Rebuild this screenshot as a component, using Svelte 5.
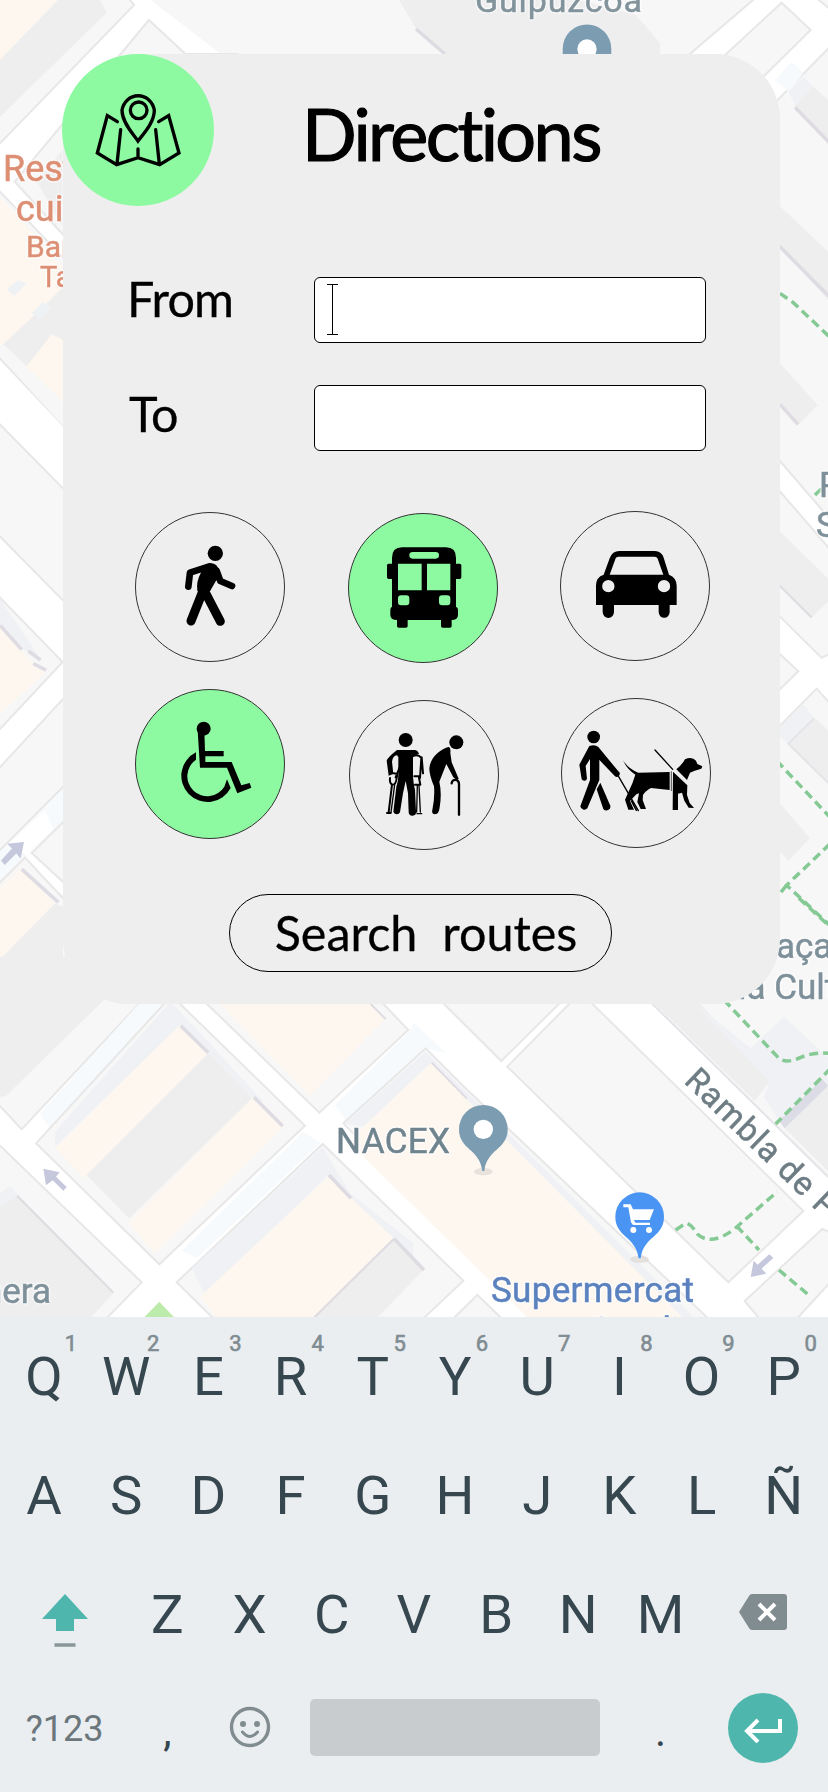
<script>
  const topRow = ['Q', 'W', 'E', 'R', 'T', 'Y', 'U', 'I', 'O', 'P'];
  const homeRow = ['A', 'S', 'D', 'F', 'G', 'H', 'J', 'K', 'L', 'Ñ'];
  const lowRow = ['Z', 'X', 'C', 'V', 'B', 'N', 'M'];
</script>

<main class="page">
  <svg class="map" viewBox="0 0 828 1320" width="828" height="1320" aria-hidden="true">
    <rect width="828" height="1320" fill="#f7f7f7" />

    <!-- north-west blocks -->
    <g transform="scale(.528 .33333)">
      <path class="road" d="M245 0 255 15 0 430V580L130 800H500V162H418L285 0Z" />
      <path class="block" d="M-9-9H242L254 15-9 445Z" />
      <path class="cream" d="M0 0H110L0 180Z" />
      <path class="grey" d="M110 0H190L202 38 0 350V180Z" />
      <path class="block" d="M282 60 28 545 120 705H450V162H351Z" />
      <path class="grey" d="M70 545 118 450V680Z" />
      <path class="block" d="M-9 560 130 790V1300L-9 1060Z" />
      <path class="cream" d="M0 590 118 800V1200L50 1100 8 1030 0 1040Z" />
    </g>
    <!-- west side -->
    <g transform="translate(0 280) scale(.33333 .45918)">
      <path class="cream" d="M0 0H189V265L80 188 0 130Z" />
      <path class="grey" d="M10 140 130 58 189 15V130L155 118 80 188Z" />
      <path class="blue" d="M20 20 55 0 80 8 42 35Z" />
      <path class="blue" d="M95 72 130 48 155 62 118 86Z" />
      <path class="road" d="M0 175 200 328V1340L0 1300Z" />
      <path class="block" d="M-9 308 200 462V706L-9 552Z" />
      <path class="block" d="M-9 685 188 832-9 985Z" />
      <path class="shade" d="M0 695 125 828 105 815 70 805 0 748Z" />
      <path class="cream" d="M0 755 65 808 90 830 125 852 140 852 0 945Z" />
      <path class="mark" d="M0 752 65 805M85 808 122 828M100 835 138 850" />
      <path class="block" d="M-9 1068 200 904V1096L-9 1248Z" />
      <path class="blueroad" d="M0 1245 189 1108V1180L160 1197 0 1310Z" />
      <path class="road" d="M30 1225 135 1155 160 1195 80 1252 50 1240Z" />
      <path class="block" d="M95 1248 200 1173V1318Z" />
      <path class="block" d="M-9 1318 75 1258 200 1355V1600H-9Z" />
      <path class="cream" d="M0 1325 60 1283 165 1358 0 1480Z" />
      <path class="mark" d="M65 1283 175 1355" />
      <path class="grey" d="M165 1358 189 1365V1600H0V1480Z" />
      <path class="arrow" d="M72 1224 22 1228 36 1238 3 1264 14 1274 49 1249 62 1260Z" />
    </g>

    <!-- north-east -->
    <path class="grey" d="M399 0 417 30 446 54H660V43L636 15 580 0Z" />
    <path class="mark" d="M416 29 445 54" />
    <g transform="translate(540 0) scale(.33333)">
      <path class="road edge" d="M645-5 450 162 560 200 705 308 874 136V30L830-5Z" />
      <path class="block" d="M725 8 812 90 665 235 540 179Z" />
      <path class="blueroad" d="M705 240 755 185 790 220 745 275Z" />
      <path class="shade" d="M745 275 790 232 820 260 768 320Z" />
      <path class="grey" d="M820 260 864 300V430L765 320Z" />
      <path class="mark" d="M765 322 870 430" />
      <path class="grey" d="M700 600 864 755V900L700 720Z" />
      <path class="mark" d="M700 720 870 892" />
      <path class="trail" d="M720 880 760 908 870 1012" />
      <path class="grey" d="M720 1090 833 1215 775 1275 700 1200Z" />
      <path class="mark" d="M720 1213 774 1273" />
    </g>
    <!-- east side -->
    <g transform="translate(700 280) scale(.33333 .45918)">
      <path class="road edge" d="M230 386 394 524V590L230 452Z" />
      <path class="trail" d="M345 468 368 452" />
      <path class="grey" d="M230 540 310 598 384 650V700L335 735 230 660Z" />
      <path class="mark thin" d="M230 659 335 735" />
      <path class="road edge" d="M230 726 365 823 395 812V926L350 890 230 978Z" />
      <path class="block" d="M230 808 295 852 230 898Z" />
      <path class="shade" d="M230 980 310 925 345 955 265 1010 240 995Z" />
      <path class="grey" d="M345 955 384 980V1095L265 1010Z" />
      <path class="outline" d="M390 1099 265 1010 342 955" />
      <path class="grey" d="M240 1140 330 1215 265 1265 230 1235Z" />
      <path class="trail" d="M230 1047 390 1170M390 1228 260 1318 390 1406M260 1318 230 1345" />
    </g>

    <!-- south-west blocks -->
    <g transform="translate(0 960) scale(.33333)">
      <path class="road" d="M-5 420 60 500 410 132V102H2500V1080H-5Z" />
      <path class="block" d="M-9 0H540L65 508-9 428Z" />
      <path class="grey" d="M-9-10H430L320 112 18 408-9 412Z" />
      <path class="blueroad" d="M120 462 152 508 500 132 440 105Z" />
      <path class="block" d="M108 550 515 107 915 497 478 913Z" />
      <path class="shade" d="M165 515 512 125 640 262 790 425 755 412 540 195 165 560Z" />
      <path class="cream" d="M540 195 625 280 252 655 165 565Z" />
      <path class="grey" d="M625 280 757 415 387 775 260 645Z" />
      <path class="cream" d="M757 415 850 500 465 880 385 790Z" />
      <path class="mark" d="M542 197 625 278M762 412 848 498" />
      <path class="block" d="M590 102 958 458 1225 210 1115 95Z" />
      <path class="cream" d="M640 112 930 408 1157 175 1090 112Z" />
      <path class="mark thin" d="M1110 130 1157 177" />
      <path class="blueroad" d="M1005 435 1228 215 1242 190 1340 280 1277 265 1040 485Z" />
      <path class="block" d="M1030 490 1277 265 1392 380 2140 1090H1620Z" />
      <path class="shade" d="M1035 492 1277 275 2085 1075H2050L1292 310 1090 500Z" />
      <path class="cream" d="M1090 500 1292 310 2050 1075H1585L1090 590 1060 545Z" />
      <path class="mark thin" d="M1295 308 1400 415" />
      <path class="blueroad" d="M545 872 910 515 962 548 590 895Z" />
      <path class="block" d="M530 967 968 552 1390 962 1260 1085H650Z" />
      <path class="shade" d="M575 925 968 562 1050 700 1240 850V910L985 645 615 1005Z" />
      <path class="cream" d="M985 650 1182 835 930 1085H660L600 1010Z" />
      <path class="grey" d="M1182 838 1272 928 1120 1085H930Z" />
      <path class="mark" d="M987 645 1053 715M1182 836 1272 930" />
      <path class="mark thin" d="M1182 836 935 1080" />
      <path class="block" d="M1432 1005 1350 1085H1515Z" />
      <path d="M478 1025 425 1080H530Z" fill="#bdebab" />
      <path class="block" d="M-9 548 425 967 310 1085H-9Z" />
      <path class="shade" d="M0 700 30 678 60 708 0 760Z" />
      <path class="grey" d="M0 740 50 710 340 1000 260 1085H0Z" />
      <path class="mark thin" d="M52 708 340 998" />
      <path class="arrow" d="M130 626 179 637 168 650 200 681 190 692 158 661 138 676Z" />
    </g>
    <!-- south-east blocks -->
    <g transform="translate(414 900) scale(.33333)">
      <path class="block" d="M60 282 262 483 465 282Z" />
      <path class="block" d="M280 500 495 282 505 282 1168 933 943 1147Z" />
      <path d="M685 280 1260 848V280Z" fill="#f7f7f7" />
      <path class="grey" d="M700 290H840L1068 545 1022 602Z" />
      <path class="shade" d="M830 300 1010 445 1110 350 1250 480V540L1110 685 1050 590 1068 545Z" />
      <path class="grey" d="M1250 540 1112 685 1250 820Z" />
      <path d="M1225 538 1242 558 1112 685 1095 662Z" fill="#dcdce6" />
      <path class="outline" d="M685 282 1260 848" />
      <path class="block" d="M992 1203 1225 987 1255 1000V1140L1200 1200 1145 1260H1040Z" />
      <path class="trail" d="M1155-5 1250 82M930 300 1090 470Q1112 495 1160 472 1200 456 1250 460M1250 505 1085 672M785 990 815 970 Q830 970 850 1002 890 1040 960 988L1090 875M968 978 1035 1050M1095 1110 1190 1190" />
      <path class="arrow" d="M1010 1131 1019 1082 1031 1094 1066 1063 1078 1074 1043 1106 1057 1121Z" />
      <ellipse cx="208" cy="815" rx="28" ry="11" fill="#d9d4d0" opacity=".6" />
      <path d="M208 615a73 73 0 0 1 73 73c0 62-62 58-70 125h-6c-8-67-70-63-70-125a73 73 0 0 1 73-73Z" fill="#7c9db1" />
      <circle cx="208" cy="688" r="29" fill="#fff" />
      <ellipse cx="677" cy="1078" rx="28" ry="11" fill="#d9d4d0" opacity=".6" />
      <path d="M677 877a73 73 0 0 1 73 73c0 62-62 58-70 125h-6c-8-67-70-63-70-125a73 73 0 0 1 73-73Z" fill="#4a95f3" />
      <path d="M628 913H650L657 928H720L707 960H660L664 968H708V975H657L651 967 643 922H628Z" fill="#fff" />
      <circle cx="658" cy="990" r="9" fill="#fff" /><circle cx="705" cy="990" r="9" fill="#fff" />
    </g>

    <path d="M587 24.500a24.300 24.300 0 0 1 24.300 24.300V60h-48.600V48.800a24.300 24.300 0 0 1 24.300-24.300Z" fill="#7c9db1" />
    <circle cx="587" cy="49" r="9.700" fill="#fff" />

    <g class="halo">
      <text x="475" y="12" font-size="34" textLength="167" fill="#82939c" stroke="#82939c">Guipúzcoa</text>
      <g fill="#dd8f74" stroke="#dd8f74">
        <text x="3" y="180.500" font-size="36">Rest</text>
        <text x="16" y="221" font-size="36">cuin</text>
        <text x="26" y="256.500" font-size="30">Bar</text>
        <text x="40" y="287" font-size="29">Ta</text>
      </g>
      <g fill="#7e909a" stroke="#7e909a">
        <text x="819" y="497" font-size="35">P</text>
        <text x="816" y="537" font-size="35">S</text>
        <text x="776" y="958" font-size="35">aça</text>
        <text x="738" y="999" font-size="35">la Cult</text>
        <text x="51" y="1303" font-size="35" text-anchor="end">nera</text>
      </g>
      <text x="336" y="1153" font-size="35" textLength="114" fill="#6f848e" stroke="#6f848e">NACEX</text>
      <g fill="#5b82bf" stroke="#5b82bf">
        <text x="491" y="1301.500" font-size="35" textLength="203">Supermercat</text>
        <text x="589" y="1341.500" font-size="35">Condis</text>
      </g>
      <text transform="translate(683 1082) rotate(44)" font-size="33" fill="#6e7d84" stroke="#6e7d84" textLength="198">Rambla de P</text>
    </g>
  </svg>

  <section class="card">
    <header>
      <div class="badge">
        <svg viewBox="6 12 456 456" fill="none" stroke="#000" stroke-width="10" stroke-linecap="round">
          <path d="M234 276C222 258 186 222 186 184A49 51 0 0 1 283 184C283 222 247 258 234 276Z" />
          <circle cx="236" cy="184" r="25" />
          <path d="M172 218 142 200 112 312 170 347 234 326 299 347 357 312 326 200 296 218M182 242 171 345M287 242 298 345M234 300V325" />
        </svg>
      </div>
      <h1>Directions</h1>
    </header>

    <form>
      <div class="field">
        <label for="from">From</label>
        <div class="box" id="from">
          <svg width="11" height="52" viewBox="0 0 11 52"><path d="M0 .5H11M5.500 0V51M0 50.500H11" stroke="#000" /></svg>
        </div>
      </div>
      <div class="field second">
        <label for="to">To</label>
        <div class="box" id="to"></div>
      </div>
    </form>

    <div class="modes">
      <div class="mode walk">
        <svg viewBox="75 66 450 450">
          <circle cx="316" cy="190" r="23" />
          <path d="M283 226Q306 213 319 226Q330 240 334 262L318 272 300 304Q276 312 262 303Q258 275 272 250Z" />
          <path class="ln" stroke-width="20" d="M235 290 240 248 298 229M320 243 331 273 366 288" />
          <path class="ln" stroke-width="27" d="M243 393 280 300M331 394 283 302" />
        </svg>
      </div>
      <div class="mode bus on">
        <svg viewBox="-156 69 450 450">
          <path fill-rule="evenodd" d="M6 172H138Q168 172 168 204V221H179Q184 221 184 226V262Q184 267 179 267H168V350Q174 353 174 360V375Q174 390 155 390V408Q155 413 150 413H128Q123 413 123 408V390H23V408Q23 413 18 413H-4Q-9 413-9 408V390Q-29 390-29 375V360Q-29 353-24 350V267H-34Q-39 267-39 262V226Q-39 221-34 221H-24V204Q-24 172 6 172ZM38 186A10 10 0 0 0 38 206H107A10 10 0 0 0 107 186ZM-6 221V301H65V221ZM81 221V301H151V221ZM3 316Q-6 316-6 325V337Q-6 346 3 346H19Q28 346 28 337V325Q28 316 19 316ZM126 316Q117 316 117 325V337Q117 346 126 346H142Q151 346 151 337V325Q151 316 142 316Z" />
        </svg>
      </div>
      <div class="mode car">
        <svg viewBox="477 63 450 450">
          <path fill-rule="evenodd" d="M608 254 626 205Q634 183 655 183H762Q781 183 788 203L804 254Q827 263 827 287V345H806V366A16 17 0 0 1 773 366V345H639V366A16 17 0 0 1 605 366V345H585V287Q585 261 608 254ZM626 254H787L770 206Q768 200 761 200H652Q646 200 644 205ZM622 270A18 18 0 0 0 622 307 18 18 0 0 0 622 270ZM789 270A18 18 0 0 0 789 307 18 18 0 0 0 789 270Z" />
        </svg>
      </div>
      <div class="mode wheel on">
        <svg viewBox="75 597 450 450">
          <circle cx="278" cy="716" r="21" />
          <path d="M260 722H280L282 783H338V799H283V816H362L391 886 416 879 421 893 379 910 348 833H267Z" />
          <path d="M255 787V809A60 60 0 1 0 340 890L348 868 359 894A78.500 78.500 0 1 1 255 787Z" />
        </svg>
      </div>
      <div class="mode crutch">
        <svg viewBox="-153 630 450 450">
          <circle cx="17" cy="750" r="21" />
          <path d="M-9 780H44Q53 780 57 792L39 797V860Q40 878 45 900L48 965A11 11 0 0 1 26 967L24 910 17 873 9 910 0 967A11 11 0 0 1-20 965L-11 890Q-5 875-5 855V796Q-21 792-24 815L-20 852-34 857-40 812Q-38 803-9 780Z" />
          <path class="ln" stroke-width="6" d="M-5 797Q3 790 12 799L-13 862M-30 864Q-32 882-22 884-12 884-10 864L-8 852-19 850M-24 884-34 967M-39 969H-28M39 798Q55 792 64 804L60 864M65 802 69 850M43 859H58M45 884H61M57 864 61 884" />
          <path class="ln" stroke-width="4" d="M-16 884-27 967M52 886 50 966M57 886 61 966M51 971H65" />
          <circle cx="169" cy="757" r="21" />
          <path d="M88 835C91 803 118 779 145 771Q153 772 151 789L155 817 170 852 176 866 171 871 160 862 139 822 118 875Q126 910 119 952 117 973 105 973 94 971 97 960 105 920 102 889 88 857 88 835Z" />
          <path class="ln" stroke-width="7" d="M155 880C156 865 177 867 177 883V974" />
        </svg>
      </div>
      <div class="mode dog">
        <svg viewBox="480 624 450 450">
          <circle cx="578" cy="741" r="19" />
          <path d="M565 768Q582 762 592 771L652 844A9 9 0 0 1 642 859L582 796 595 808V870L559 955A12 12 0 0 1 538 949L567 870V807L554 828 558 866A9 9 0 0 1 542 868L535 824ZM587 898 598 878 628 947A12 12 0 0 1 607 957Z" />
          <path class="ln" stroke-width="4" d="M653 860 712 962M762 780 815 838M691 933 706 961" />
          <path d="M666 811Q684 838 712 848L806 846V900L750 894Q733 903 726 915L725 930 735 957H719L709 936 714 910 706 913 687 933 699 959H682L672 929 684 902Q696 878 703 854 678 838 666 811ZM816 845 859 886 858 915 866 939 879 954 863 953 850 932 843 908 831 911V960H815ZM826 838Q844 823 852 808 873 799 885 812L889 822 904 829 901 836 881 842 867 848 858 870Z" />
          <path class="ln" stroke-width="2" d="M811 845V902" />
        </svg>
      </div>
    </div>

    <button type="button">Search  routes</button>
  </section>

  <section class="keyboard">
    {#each topRow as key, i}
      <div class="key">{key}<span class="num">{(i + 1) % 10}</span></div>
    {/each}
    {#each homeRow as key}
      <div class="key">{key}</div>
    {/each}
    <div class="key wide">
      <svg width="48" height="86" viewBox="0 0 48 86">
        <path d="M24 0 47 25H33V37H15V25H1Z" transform="translate(0 22)" fill="#4eb6ac" />
        <path d="M13.500 73H34.500" stroke="#89969a" stroke-width="3.500" />
      </svg>
    </div>
    {#each lowRow as key}
      <div class="key">{key}</div>
    {/each}
    <div class="key wide">
      <svg class="erase" width="48" height="36" viewBox="0 0 48 36">
        <path d="M13 0H45Q48 0 48 3V33Q48 36 45 36H13Q11 36 10 34L0 18 10 2Q11 0 13 0Z" fill="#808c90" />
        <path d="M20 10 36 26M36 10 20 26" stroke="#fff" stroke-width="4" />
      </svg>
    </div>
    <div class="key wide sym">?123</div>
    <div class="key punct">,</div>
    <div class="key emoji">
      <svg width="42" height="42" viewBox="0 0 42 42">
        <circle cx="21" cy="21" r="18.500" fill="none" stroke="#808c90" stroke-width="3.400" />
        <circle cx="14" cy="18" r="3" fill="#808c90" /><circle cx="28" cy="18" r="3" fill="#808c90" />
        <path d="M13.500 26Q21 35 28.500 26" fill="none" stroke="#808c90" stroke-width="3" stroke-linecap="round" />
      </svg>
    </div>
    <div class="key space"><span></span></div>
    <div class="key punct">.</div>
    <div class="key wide">
      <span class="enter">
        <svg width="40" height="26" viewBox="0 0 40 26"><path d="M37 2V14H4M15 3 4 14 15 25" fill="none" stroke="#fff" stroke-width="4" /></svg>
      </span>
    </div>
  </section>
</main>

<style>
  :global(body) { margin: 0; }
  .page {
    position: relative;
    width: 828px;
    height: 1792px;
    box-sizing: border-box;
    padding-top: 54px;
    overflow: hidden;
    display: flex;
    flex-direction: column;
    justify-content: space-between;
    background: #f7f7f7;
    font-family: Lato, sans-serif;
  }
  .map { position: absolute; top: 0; left: 0; }
  .map path { vector-effect: non-scaling-stroke; }
  .road { fill: #fff; }
  .edge, .block { stroke: #e7e7e7; stroke-width: 2px; }
  .block { fill: #f7f7f7; }
  .outline { fill: none; stroke: #e4e4e9; stroke-width: 2px; }
  .cream { fill: #fef7f0; }
  .grey { fill: #eee; }
  .shade { fill: #eff1f4; }
  .blue { fill: #eef2f5; }
  .blueroad { fill: #f7fafc; }
  .mark { fill: none; stroke: #dedbe2; stroke-width: 3.500px; }
  .thin { stroke-width: 2px; }
  .arrow { fill: #c5c8dc; }
  .trail { fill: none; stroke: #85c994; stroke-width: 3.500px; stroke-dasharray: 9 5; }
  .halo {
    font-family: Roboto, sans-serif;
    stroke-width: .5px;
    filter: drop-shadow(0 0 1px #fff) drop-shadow(0 0 1px #fff);
  }

  .card {
    position: relative;
    width: 717px;
    height: 950px;
    margin-left: 63px;
    border-radius: 76px 65px 65px 65px;
    background: #eee;
  }
  header { display: flex; height: 152px; margin-left: -1px; }
  .badge { width: 152px; height: 152px; border-radius: 50%; background: #8dfaa2; }
  .badge svg { display: block; margin-top: -1px; }
  h1 {
    margin: 36px 0 0 88px;
    font-size: 72px;
    line-height: 86px;
    font-weight: 400;
    letter-spacing: -2.600px;
    -webkit-text-stroke: 1.200px #000;
  }
  form { margin: 71px 0 0 63px; }
  .field { display: flex; height: 66px; }
  .second { margin-top: 42px; }
  label {
    width: 187px;
    margin-top: -8px;
    padding-left: 1px;
    font-size: 48.500px;
    line-height: 58px;
    letter-spacing: -.8px;
    -webkit-text-stroke: .3px #000;
  }
  .second label { width: 185px; margin-top: -1px; padding-left: 3px; }
  .box {
    box-sizing: border-box;
    width: 392px;
    height: 66px;
    padding: 6px 12px;
    border: 1px solid #000;
    border-radius: 6px;
    background: #fff;
  }
  .modes {
    display: grid;
    grid-template-columns: 213.500px 211px 150px;
    grid-template-rows: 187px 152px;
    margin: 60px 0 0 72px;
  }
  .mode {
    box-sizing: border-box;
    width: 150px;
    height: 150px;
    border: 1px solid #333;
    border-radius: 50%;
  }
  .mode svg { display: block; width: 150px; height: 150px; margin: -1px; }
  .on { background: #8dfaa2; }
  .walk { margin-top: 1px; }
  .bus { margin: 2px 0 0 -1px; }
  .wheel { margin-top: -9px; }
  .wheel svg { margin-left: 0; }
  .crutch { margin-top: 2px; }
  .dog { margin-left: 1px; }
  .ln { fill: none; stroke: #000; stroke-linecap: round; stroke-linejoin: round; }
  button {
    display: block;
    width: 383px;
    height: 78px;
    margin: 44px 0 0 166px;
    padding: 0 0 3px 11px;
    border: 1px solid #000;
    border-radius: 39px;
    background: none;
    color: #000;
    font: 48.500px Lato, sans-serif;
    white-space: pre;
    -webkit-text-stroke: .3px #000;
  }

  .keyboard {
    position: relative;
    display: grid;
    grid-template-columns: repeat(20, 41.100px);
    grid-auto-rows: 119px;
    height: 475px;
    padding-left: 3px;
    background: #eaeef1;
    color: #37474f;
    font: 54.500px/119px Roboto, sans-serif;
    text-align: center;
  }
  .key { position: relative; grid-column: span 2; display: flex; justify-content: center; align-items: center; }
  .wide { grid-column: span 3; }
  .num {
    position: absolute;
    top: 14px;
    left: 58px;
    width: 20px;
    font-size: 22px;
    line-height: 26px;
    color: #808c91;
    -webkit-text-stroke: .6px #808c91;
  }
  .erase { margin-top: -6px; }
  .sym { font-size: 36px; line-height: 110px; align-items: flex-start; color: #6b777c; }
  .punct { font-size: 42px; line-height: 116px; align-items: flex-start; }
  .emoji, .space { align-items: flex-start; }
  .emoji svg { margin-top: 32px; }
  .space { grid-column: span 8; }
  .space span { width: 290px; height: 57px; margin-top: 25px; border-radius: 5px; background: #c8cccf; }
  .enter {
    display: flex;
    align-items: center;
    justify-content: center;
    width: 70px;
    height: 70px;
    margin-top: -11px;
    border-radius: 50%;
    background: #4eb6ac;
  }
  .enter svg { margin-top: 4px; }
</style>
